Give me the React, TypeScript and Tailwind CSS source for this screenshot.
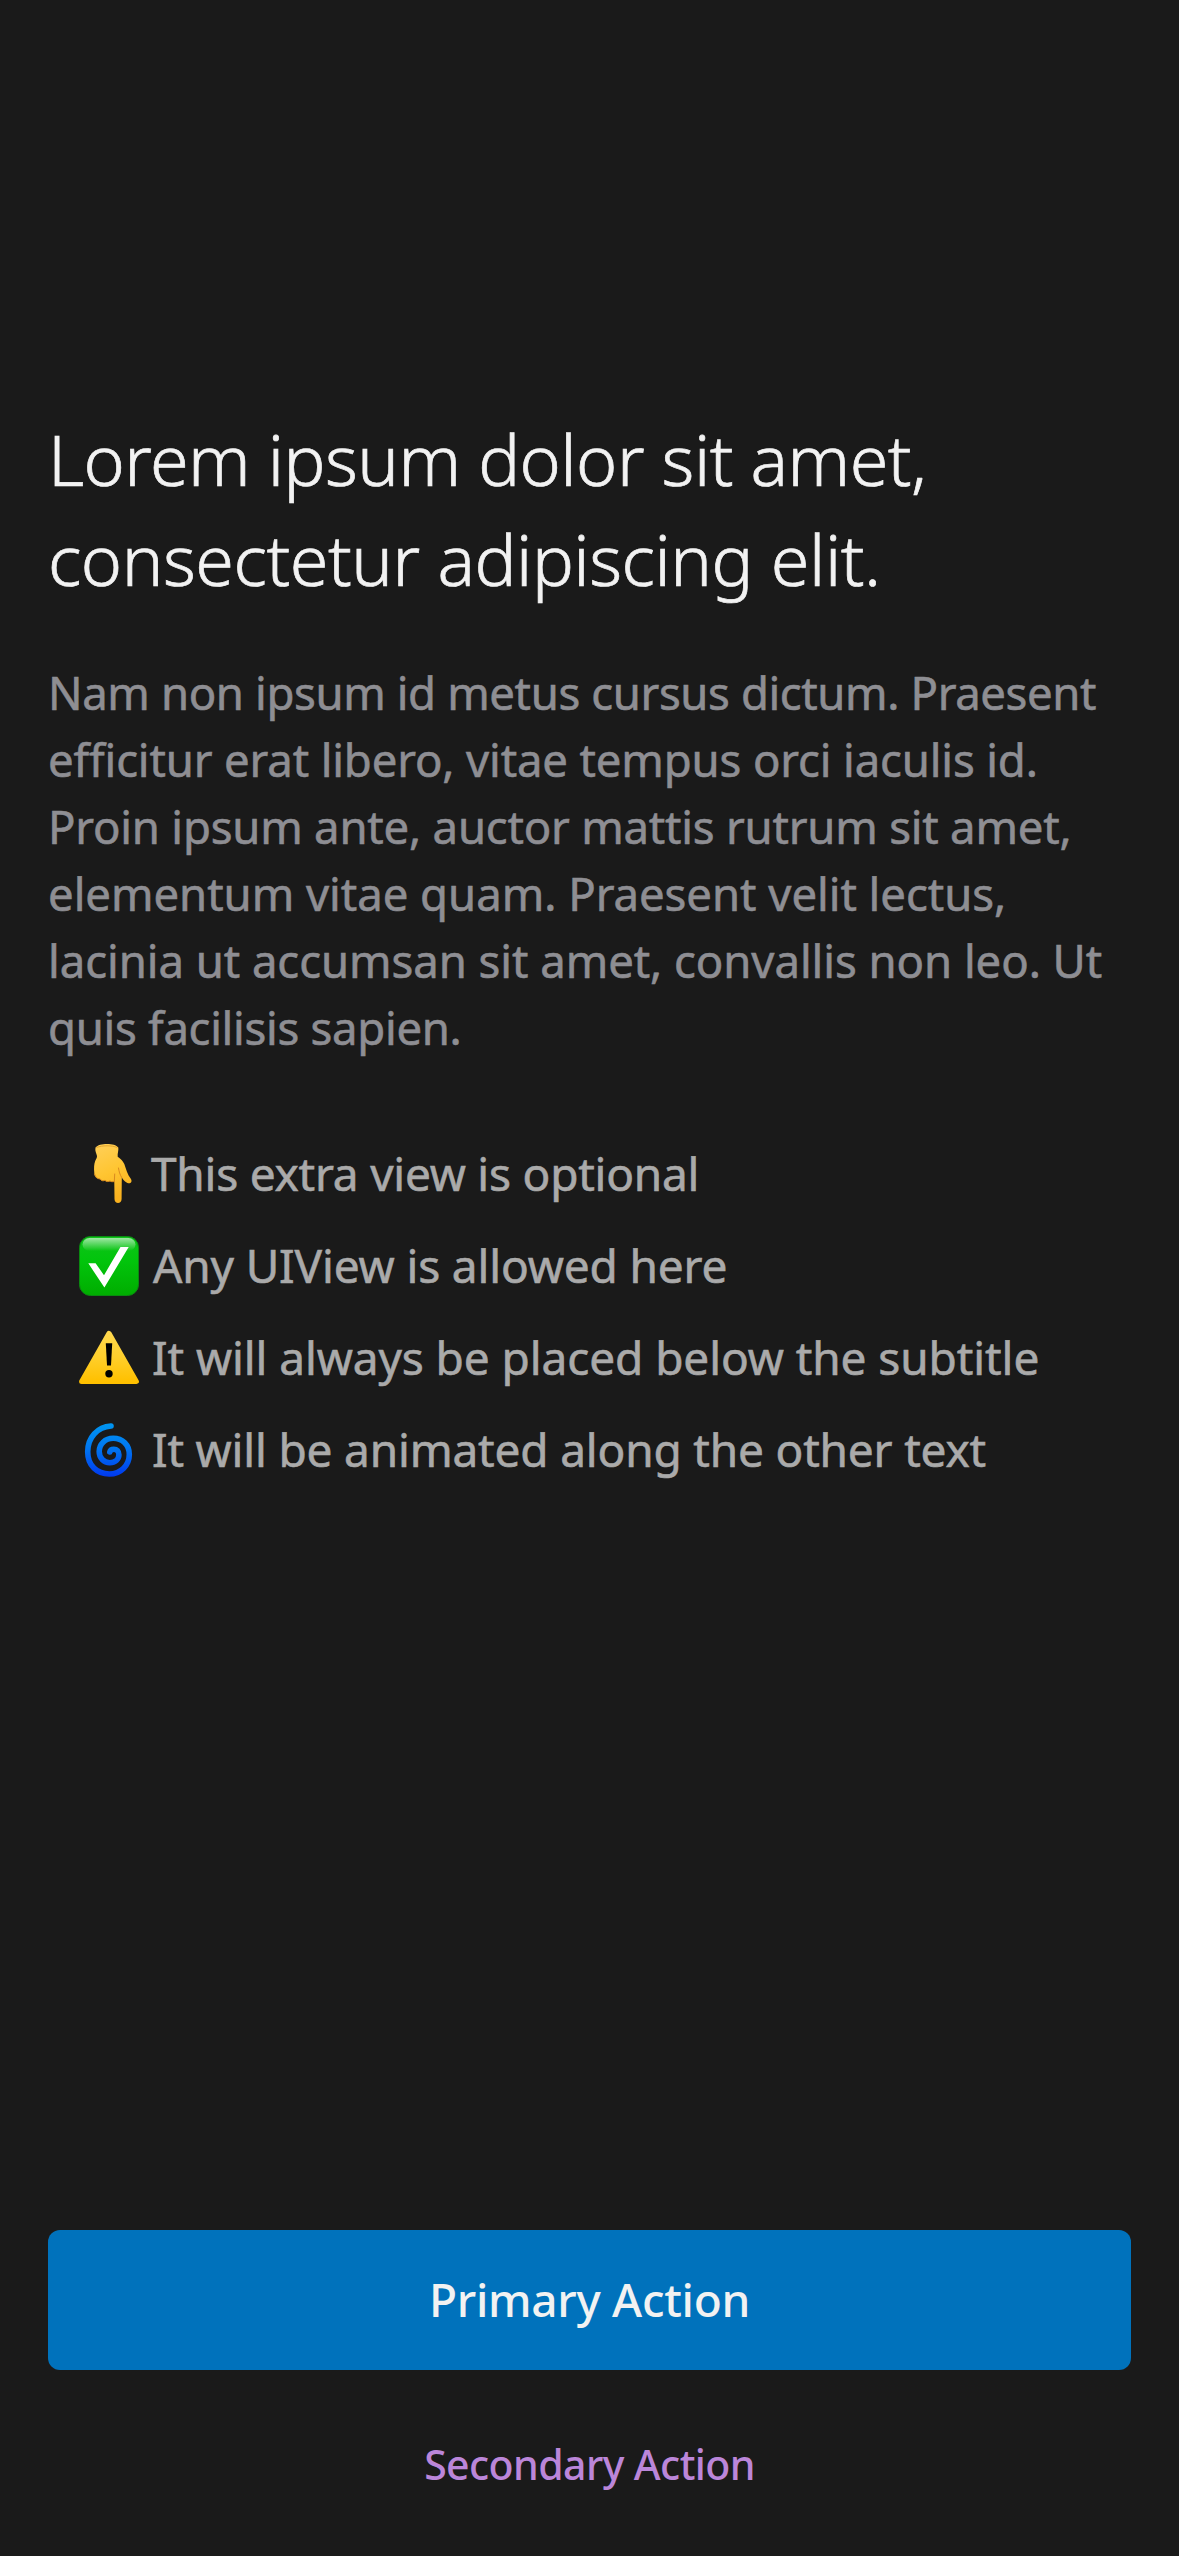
import type { ReactNode } from "react";

function PointingDown() {
  return (
    <svg viewBox="0 0 60 60" className="size-[60px] shrink-0 overflow-visible">
      <defs>
        <linearGradient id="hand" x1="0" y1="0" x2="0.3" y2="1">
          <stop offset="0" stopColor="#ffd05a" />
          <stop offset="0.55" stopColor="#ffc531" />
          <stop offset="1" stopColor="#f9b11f" />
        </linearGradient>
      </defs>
      <path
        d="M16.5 4.5C18.5 2 23 1 28 1S37.5 2 39.3 4.5C39.8 7.5 38.3 10.5 38.7 13.7C42 16 44.2 18.5 45.3 21C47 26 48.5 31.5 51.8 35.8C53.8 39 51.3 41.3 48.5 40C46 39 44.2 36.8 42.8 34.6L42.6 56C42.6 61.2 35.5 61.3 35.5 56L35.3 38.6C33.5 39 32 38.9 31 38C29 39 27 38.7 26 37.4C24 38.3 21.8 37.7 20.8 36C17.5 35.7 15.3 33.5 15.3 30C14.8 25 15 21 16.2 18C16.9 16.2 18.2 15 18 13C17.5 10 15.7 8 16.5 4.5Z"
        fill="url(#hand)"
      />
      <path d="M17.5 4.6C23 2.2 33 2.2 38.4 4.6" fill="none" stroke="#e3a62f" strokeWidth="1" />
      <path
        d="M42.7 34.5C40.8 31.5 40 28.5 39.5 25M35.3 39L35.7 31M15.6 31C16.5 34.5 18.5 35.7 20.8 36M21 36C22.4 38.2 24.5 38 26 37.3C27.5 39 29.5 38.7 31 38C32.4 39 33.8 38.8 35.2 38.4"
        fill="none"
        stroke="#d98a1f"
        strokeWidth="1"
        strokeLinecap="round"
      />
    </svg>
  );
}

function CheckMark() {
  return (
    <svg viewBox="0 0 60 60" className="size-[60px] shrink-0 overflow-visible">
      <defs>
        <linearGradient id="box" x1="0" y1="0" x2="0" y2="1">
          <stop offset="0" stopColor="#0fc31b" />
          <stop offset="0.4" stopColor="#02c50c" />
          <stop offset="1" stopColor="#00ad00" />
        </linearGradient>
        <linearGradient id="gloss" x1="0" y1="0" x2="0" y2="1">
          <stop offset="0" stopColor="#ffffff" stopOpacity="0.6" />
          <stop offset="1" stopColor="#ffffff" stopOpacity="0" />
        </linearGradient>
      </defs>
      <rect x="0.5" y="1.5" width="59" height="59" rx="11" fill="url(#box)" stroke="#0a8a10" />
      <rect x="3.5" y="3" width="53" height="13" rx="7" fill="url(#gloss)" />
      <path d="M9.3 28.3H16.6L25 40.2L41.5 12H49.7L25.4 52.6Z" fill="#fff" />
    </svg>
  );
}

function Warning() {
  return (
    <svg viewBox="0 0 60 60" className="size-[60px] shrink-0 overflow-visible">
      <defs>
        <linearGradient id="sign" x1="0" y1="0" x2="0" y2="1">
          <stop offset="0" stopColor="#ffd84d" />
          <stop offset="0.5" stopColor="#ffcf2b" />
          <stop offset="1" stopColor="#ffc000" />
        </linearGradient>
      </defs>
      <path
        d="M30 6.3L57.4 54.4H2.6Z"
        fill="url(#sign)"
        stroke="url(#sign)"
        strokeWidth="5"
        strokeLinejoin="round"
      />
      <path d="M26.8 16.2H33.2L32 38.4H28Z" fill="#000" />
      <circle cx="30" cy="46.7" r="3.7" fill="#000" />
    </svg>
  );
}

function Swirl() {
  return (
    <svg viewBox="0 0 60 60" className="size-[60px] shrink-0 overflow-visible">
      <defs>
        <linearGradient id="swirl" gradientUnits="userSpaceOnUse" x1="0" y1="4" x2="0" y2="58">
          <stop offset="0" stopColor="#0096f0" />
          <stop offset="0.45" stopColor="#0078f0" />
          <stop offset="1" stopColor="#0038ee" />
        </linearGradient>
      </defs>
      <path
        d="M32 7C18.5 7.8 8.7 18.5 8.7 32.7C8.7 46.5 18 55 30.3 55C42 55 50.3 46 50.3 35.5C50.3 26 43.5 19.3 34.2 19.3C26 19.3 20.2 25.2 20.2 32.5C20.2 39 24.8 43.7 30.8 43.7C36.2 43.7 39.9 40.3 39.9 35.8C39.9 32.4 37.7 30.2 34.9 30.2C32.7 30.2 31.1 31.3 30.8 33"
        fill="none"
        stroke="url(#swirl)"
        strokeWidth="5.6"
        strokeLinecap="round"
      />
    </svg>
  );
}

function Item({ icon, children }: { icon: ReactNode; children: ReactNode }) {
  return (
    <li className="flex h-[92px] items-center">
      {icon}
      {children}
    </li>
  );
}

export default function App() {
  return (
    <main className="flex h-[2556px] w-full flex-col bg-[#1a1a1a] px-12 pt-[409px] font-['Noto_Sans',sans-serif] whitespace-nowrap">
      <h1 className="text-[70px] leading-[100px] font-light text-[#f2f2f2] [-webkit-text-stroke:0.7px_#f2f2f2]">
        <span className="block tracking-[-0.53px]">Lorem ipsum dolor sit amet,</span>
        <span className="block tracking-[-0.45px]">consectetur adipiscing elit.</span>
      </h1>

      <p className="mt-[50px] text-[45.5px] leading-[67px] text-[#8e8e93] [-webkit-text-stroke:0.6px_#8e8e93]">
        <span className="block tracking-[-0.38px]">Nam non ipsum id metus cursus dictum. Praesent</span>
        <span className="block tracking-[-0.14px]">efficitur erat libero, vitae tempus orci iaculis id.</span>
        <span className="block tracking-[-0.21px]">Proin ipsum ante, auctor mattis rutrum sit amet,</span>
        <span className="block tracking-[-0.03px]">elementum vitae quam. Praesent velit lectus,</span>
        <span className="block tracking-[-0.05px]">lacinia ut accumsan sit amet, convallis non leo. Ut</span>
        <span className="block tracking-[-0.29px]">quis facilisis sapien.</span>
      </p>

      <ul className="mt-[66px] pl-[31px] text-[46px] text-[#aaaaaa] [-webkit-text-stroke:0.6px_#aaaaaa]">
        <Item icon={<PointingDown />}>
          <span className="ml-[12px] pt-px tracking-[-0.23px]">This extra view is optional</span>
        </Item>
        <Item icon={<CheckMark />}>
          <span className="ml-[14px] pt-px tracking-[-0.15px]">Any UIView is allowed here</span>
        </Item>
        <Item icon={<Warning />}>
          <span className="ml-[13px] pt-px tracking-[-0.09px]">It will always be placed below the subtitle</span>
        </Item>
        <Item icon={<Swirl />}>
          <span className="ml-[13px] pt-px tracking-[-0.18px]">It will be animated along the other text</span>
        </Item>
      </ul>

      <div className="mt-auto flex flex-col pb-[49px]">
        <button className="h-[140px] rounded-xl bg-[#0072bc] pb-px text-[46px] font-medium tracking-[-0.3px] text-[#f2f2f2]">
          Primary Action
        </button>
        <button className="mt-[53px] h-[84px] text-[41px] font-medium tracking-[-0.58px] text-[#bb86d9]">
          Secondary Action
        </button>
      </div>
    </main>
  );
}
